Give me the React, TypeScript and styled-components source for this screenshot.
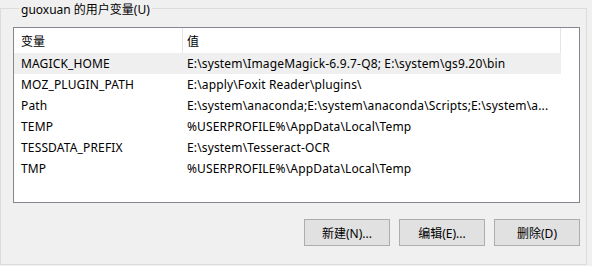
import styled, { createGlobalStyle } from "styled-components";

type EnvVar = { name: string; value: string };

const vars: EnvVar[] = [
  { name: "MAGICK_HOME", value: "E:\\system\\ImageMagick-6.9.7-Q8; E:\\system\\gs9.20\\bin" },
  { name: "MOZ_PLUGIN_PATH", value: "E:\\apply\\Foxit Reader\\plugins\\" },
  { name: "Path", value: "E:\\system\\anaconda;E:\\system\\anaconda\\Scripts;E:\\system\\a..." },
  { name: "TEMP", value: "%USERPROFILE%\\AppData\\Local\\Temp" },
  { name: "TESSDATA_PREFIX", value: "E:\\system\\Tesseract-OCR" },
  { name: "TMP", value: "%USERPROFILE%\\AppData\\Local\\Temp" },
];

const GlobalStyle = createGlobalStyle`
  body {
    margin: 0;
    background: #f0f0f0;
    font-family: "Noto Sans", "Noto Sans CJK SC", sans-serif;
    font-size: 12px;
    color: #000;
  }
`;

const Page = styled.div`
  width: 592px;
  height: 266px;
  overflow: hidden;
`;

const Group = styled.fieldset`
  box-sizing: border-box;
  width: 587px;
  height: 265px;
  margin: 0;
  padding: 11px 0 0 12px;
  border: 1px solid #dcdcdc;
  display: flex;
  flex-direction: column;
`;

const Legend = styled.legend`
  margin-left: 6px;
  padding: 0 2px;
  line-height: 16px;
  position: relative;
  top: 2px;
`;

const ListBox = styled.div`
  box-sizing: border-box;
  width: 567px;
  height: 176px;
  border: 1px solid #828790;
  background: #fff;
`;

const Table = styled.div`
  width: 547px;
`;

const HeaderRow = styled.div`
  display: grid;
  grid-template-columns: 169px 378px;
  height: 25px;
  align-items: stretch;
`;

const HeaderCell = styled.div<{ $first?: boolean }>`
  box-sizing: border-box;
  display: flex;
  align-items: center;
  padding-left: ${(p) => (p.$first ? "7px" : "4px")};
  border-right: 1px solid #e5e5e5;
`;

const Row = styled.div<{ $selected?: boolean }>`
  display: grid;
  grid-template-columns: 169px 378px;
  height: 21px;
  align-items: center;
  background: ${(p) => (p.$selected ? "#efefef" : "transparent")};
`;

const Cell = styled.div<{ $first?: boolean }>`
  padding-left: ${(p) => (p.$first ? "7px" : "4px")};
  white-space: nowrap;
  overflow: hidden;
  letter-spacing: 0.15px;
`;

const Buttons = styled.div`
  width: 567px;
  display: flex;
  justify-content: flex-end;
  gap: 9px;
  margin-top: 16px;
`;

const Button = styled.button`
  box-sizing: border-box;
  width: 86px;
  height: 27px;
  background: #e1e1e1;
  border: 1px solid #adadad;
  font-family: inherit;
  font-size: 12px;
  color: #000;
  padding: 0;
`;

export default function App() {
  return (
    <Page>
      <GlobalStyle />
      <Group>
        <Legend>guoxuan 的用户变量(U)</Legend>
        <ListBox>
          <Table>
            <HeaderRow>
              <HeaderCell $first>变量</HeaderCell>
              <HeaderCell>值</HeaderCell>
            </HeaderRow>
            {vars.map((v, i) => (
              <Row key={v.name} $selected={i === 0}>
                <Cell $first>{v.name}</Cell>
                <Cell>{v.value}</Cell>
              </Row>
            ))}
          </Table>
        </ListBox>
        <Buttons>
          <Button>新建(N)...</Button>
          <Button>编辑(E)...</Button>
          <Button>删除(D)</Button>
        </Buttons>
      </Group>
    </Page>
  );
}
